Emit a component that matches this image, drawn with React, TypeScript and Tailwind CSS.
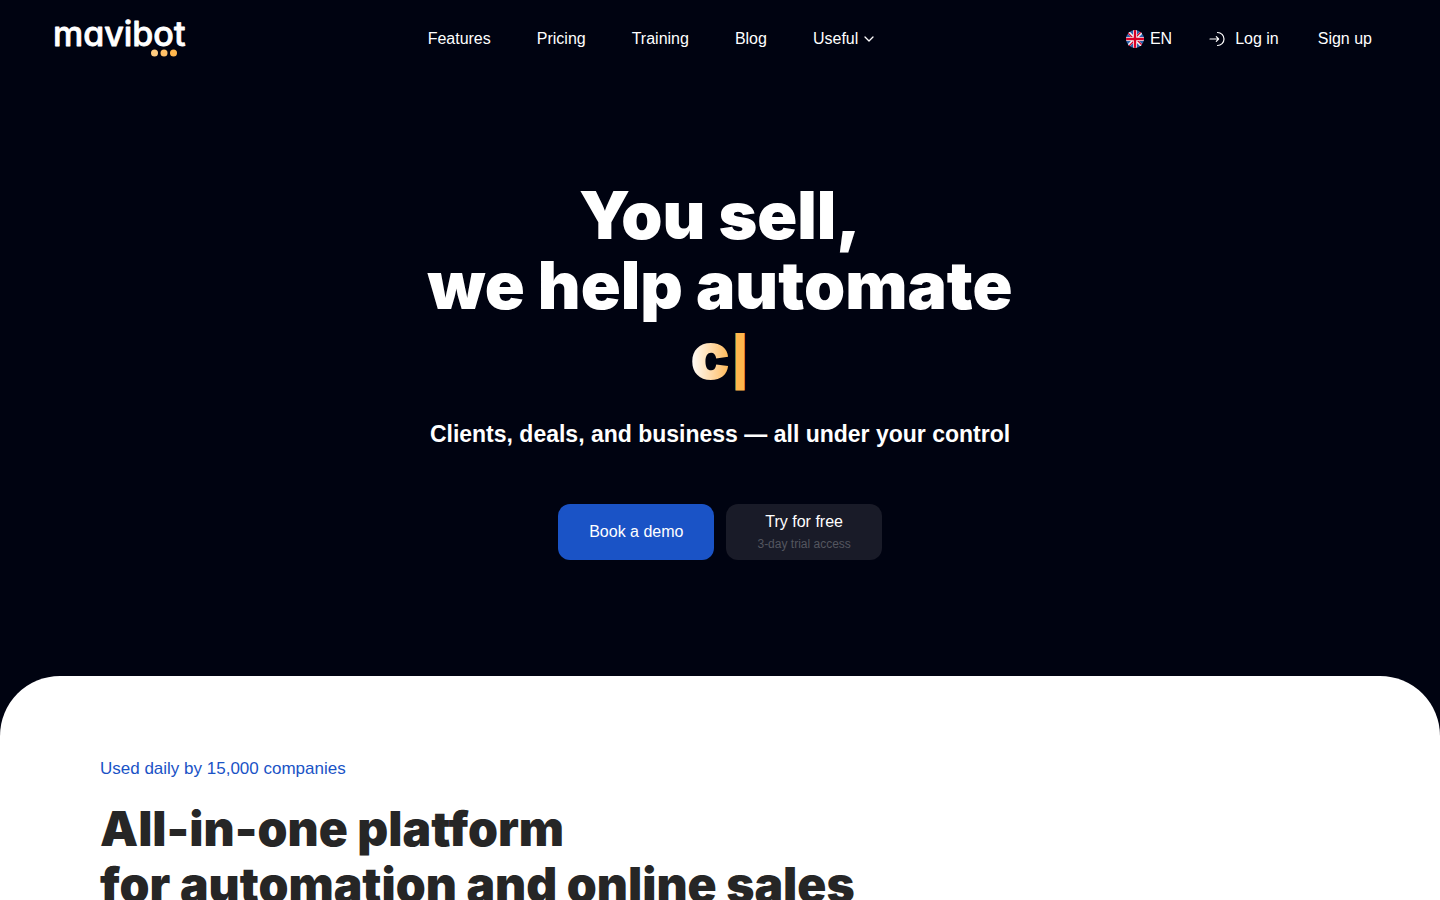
import { useId } from "react";

const navLinks = ["Features", "Pricing", "Training", "Blog"];

function Logo() {
  return (
    <svg width="134" height="54" viewBox="0 0 134 54" aria-label="mavibot" role="img">
      <text
        x="-1"
        y="34"
        fill="#fff"
        stroke="#fff"
        strokeWidth="0.8"
        strokeLinejoin="round"
        fontFamily="Inter, sans-serif"
        fontSize="34"
        fontWeight="500"
        style={{ fontFeatureSettings: '"cv11"' }}
      >
        mavibot
      </text>
      <circle cx="100.500" cy="41" r="3.500" fill="#ffcc80" />
      <circle cx="110" cy="41" r="3.500" fill="#ffc067" />
      <circle cx="119.500" cy="41" r="3.500" fill="#ffb74d" />
    </svg>
  );
}

function FlagIcon() {
  const clip = useId();
  return (
    <svg width="18" height="18" viewBox="0 0 18 18" aria-hidden="true">
      <clipPath id={clip}>
        <circle cx="9" cy="9" r="9" />
      </clipPath>
      <g clipPath={`url(#${clip})`}>
        <path fill="#2a62ad" d="M0 0h18v18H0z" />
        <path stroke="#f2f2f5" strokeWidth="3" d="M1 1l16 16M17 1L1 17" />
        <path stroke="#d80027" strokeWidth="1.200" d="M1.500 2.500L8 9M16.500 15.500L10 9M2.500 16.500L9 10M15.500 1.500L9 8" />
        <path stroke="#f2f2f5" strokeWidth="4" d="M9 0v18M0 9h18" />
        <path stroke="#d80027" strokeWidth="2.400" d="M9 0v18M0 9h18" />
      </g>
    </svg>
  );
}

function LoginIcon() {
  return (
    <svg
      width="16"
      height="16"
      viewBox="0 0 16 16"
      fill="none"
      stroke="#fff"
      strokeWidth="1.200"
      strokeLinecap="round"
      strokeLinejoin="round"
      aria-hidden="true"
    >
      <path d="M8.500 1.500a6.500 6.500 0 0 1 0 13" />
      <path d="M1 8h8.500M7.300 5.700L9.600 8L7.300 10.300" />
    </svg>
  );
}

function ChevronIcon() {
  return (
    <svg
      width="10"
      height="6"
      viewBox="0 0 10 6"
      fill="none"
      stroke="#fff"
      strokeWidth="1.300"
      strokeLinecap="round"
      strokeLinejoin="round"
      aria-hidden="true"
    >
      <path d="M1 1l4 4 4-4" />
    </svg>
  );
}

function Header() {
  return (
    <header className="flex h-[78px] items-center justify-between px-[54px]">
      <a href="#">
        <Logo />
      </a>

      <nav className="flex items-center gap-[46px]">
        {navLinks.map((label) => (
          <a key={label} href="#">
            {label}
          </a>
        ))}
        <button type="button" className="flex items-center gap-1.5">
          Useful
          <ChevronIcon />
        </button>
      </nav>

      <div className="flex items-center">
        <button type="button" className="flex items-center gap-1.5 px-3">
          <FlagIcon />
          EN
        </button>
        <a href="#" className="flex items-center gap-2.5 px-[25px]">
          <LoginIcon />
          Log in
        </a>
        <a href="#" className="px-3.5">
          Sign up
        </a>
      </div>
    </header>
  );
}

function Hero() {
  return (
    <section className="flex flex-col items-center px-6 pt-[102px] pb-29 text-center">
      <h1 className="font-[Inter,sans-serif] text-[66px] leading-[70px] font-black">
        You sell,
        <br />
        we help automate
        <br />
        <span className="bg-linear-to-r from-white to-[#ffb74d] bg-clip-text text-transparent">c</span>
        <span className="text-5xl leading-none text-[#ffb74d]">|</span>
      </h1>

      <p className="mt-7 text-[23px] leading-8 font-bold">
        Clients, deals, and business — all under your control
      </p>

      {/* Actions */}
      <div className="mt-[54px] flex gap-3">
        <button type="button" className="h-14 rounded-xl bg-[#1a53c6] px-[31px]">
          Book a demo
        </button>
        <button
          type="button"
          className="flex h-14 flex-col items-center justify-center rounded-xl bg-[#191b28] px-[31px]"
        >
          <span>Try for free</span>
          <span className="text-xs leading-5 text-[#54565f]">3-day trial access</span>
        </button>
      </div>
    </section>
  );
}

function Platform() {
  return (
    <section className="rounded-t-[60px] bg-white px-[100px] pt-20 pb-20">
      <p className="text-[17px] leading-[26px] text-[#1a53c6]">Used daily by 15,000 companies</p>
      <h2 className="mt-[19px] font-[Inter,sans-serif] text-5xl leading-14 font-black text-[#262626]">
        All-in-one platform
        <br />
        for automation and online sales
      </h2>
    </section>
  );
}

export default function App() {
  return (
    <div className="min-h-screen bg-[#000311] font-['Liberation_Sans',Arial,sans-serif] text-base text-white">
      <Header />
      <Hero />
      <Platform />
    </div>
  );
}
